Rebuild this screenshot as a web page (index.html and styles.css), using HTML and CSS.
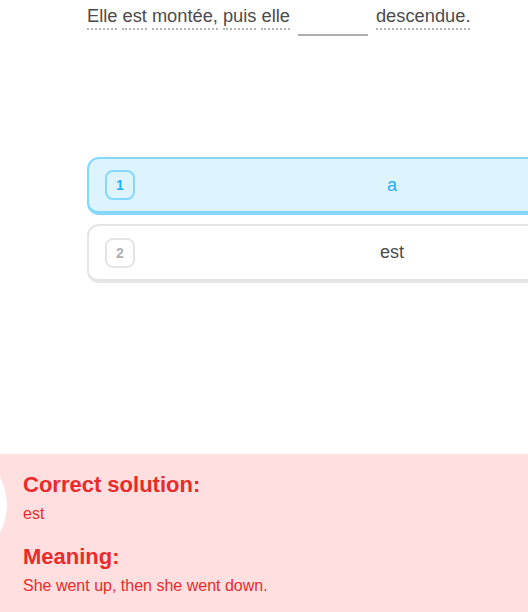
FILE: index.html
```html
<!DOCTYPE html>
<html lang="fr">
<head>
<meta charset="utf-8">
<link rel="stylesheet" href="styles.css">
</head>
<body>
<div class="page">
  <div class="sentence">
    <span class="word">Elle</span>
    <span class="word">est</span>
    <span class="word">montée,</span>
    <span class="word">puis</span>
    <span class="word">elle</span>
    <span class="blank"></span>
    <span class="word">descendue.</span>
  </div>
  <div class="choices">
    <div class="card card-selected">
      <span class="badge">1</span>
      <span class="label">a</span>
      <span></span>
    </div>
    <div class="card">
      <span class="badge">2</span>
      <span class="label">est</span>
      <span></span>
    </div>
  </div>
  <div class="feedback">
    <div class="feedback-icon"></div>
    <h2 class="fb-title">Correct solution:</h2>
    <p class="fb-text">est</p>
    <h2 class="fb-title fb-title-2">Meaning:</h2>
    <p class="fb-text">She went up, then she went down.</p>
  </div>
</div>
</body>
</html>
```
FILE: styles.css
```css
html, body {
  margin: 0;
  padding: 0;
  background: #ffffff;
}
body {
  width: 528px;
  height: 612px;
  overflow: hidden;
  font-family: "Liberation Sans", Arial, sans-serif;
}
.page {
  height: 612px;
  display: flex;
  flex-direction: column;
}
.sentence {
  display: flex;
  align-items: flex-start;
  gap: 5px;
  padding: 4px 0 0 87px;
  color: #4b4b4b;
  font-size: 18.3px;
}
.word {
  line-height: 24px;
  border-bottom: 2px dotted #b4b4b4;
}
.blank {
  width: 70px;
  height: 30px;
  margin: 0 3px;
  border-bottom: 2px solid #afafaf;
}
.choices {
  margin: 121px 0 0 87px;
  display: flex;
  flex-direction: column;
  gap: 9px;
}
.card {
  width: 610px;
  box-sizing: border-box;
  height: 58px;
  border: 2px solid #e5e5e5;
  border-bottom-width: 4px;
  border-radius: 12px;
  background: #ffffff;
  display: grid;
  grid-template-columns: 30px 1fr 30px;
  align-items: center;
  padding: 0 16px;
}
.card + .card {
  height: 59px;
}
.badge {
  width: 30px;
  height: 30px;
  box-sizing: border-box;
  border: 2px solid #e5e5e5;
  border-radius: 8px;
  display: flex;
  align-items: center;
  justify-content: center;
  font-size: 14px;
  font-weight: bold;
  color: #afafaf;
}
.label {
  text-align: center;
  font-size: 18px;
  color: #4b4b4b;
}
.card-selected {
  background: #ddf4ff;
  border-color: #84d8ff;
}
.card-selected .badge {
  border-color: #84d8ff;
  color: #1cb0f6;
}
.card-selected .label {
  color: #1cb0f6;
}
.feedback {
  margin-top: auto;
  height: 158px;
  box-sizing: border-box;
  background: #ffdfe0;
  padding: 17px 0 0 23px;
  position: relative;
  overflow: hidden;
  color: #ea2b2b;
}
.feedback-icon {
  position: absolute;
  left: -107px;
  top: -6px;
  width: 114px;
  height: 114px;
  border-radius: 50%;
  background: #ffffff;
}
.fb-title {
  margin: 0;
  font-size: 22px;
  line-height: 28px;
  font-weight: bold;
}
.fb-title-2 {
  margin-top: 18px;
}
.fb-text {
  margin: 4px 0 0 0;
  font-size: 16px;
  line-height: 22px;
}
```
